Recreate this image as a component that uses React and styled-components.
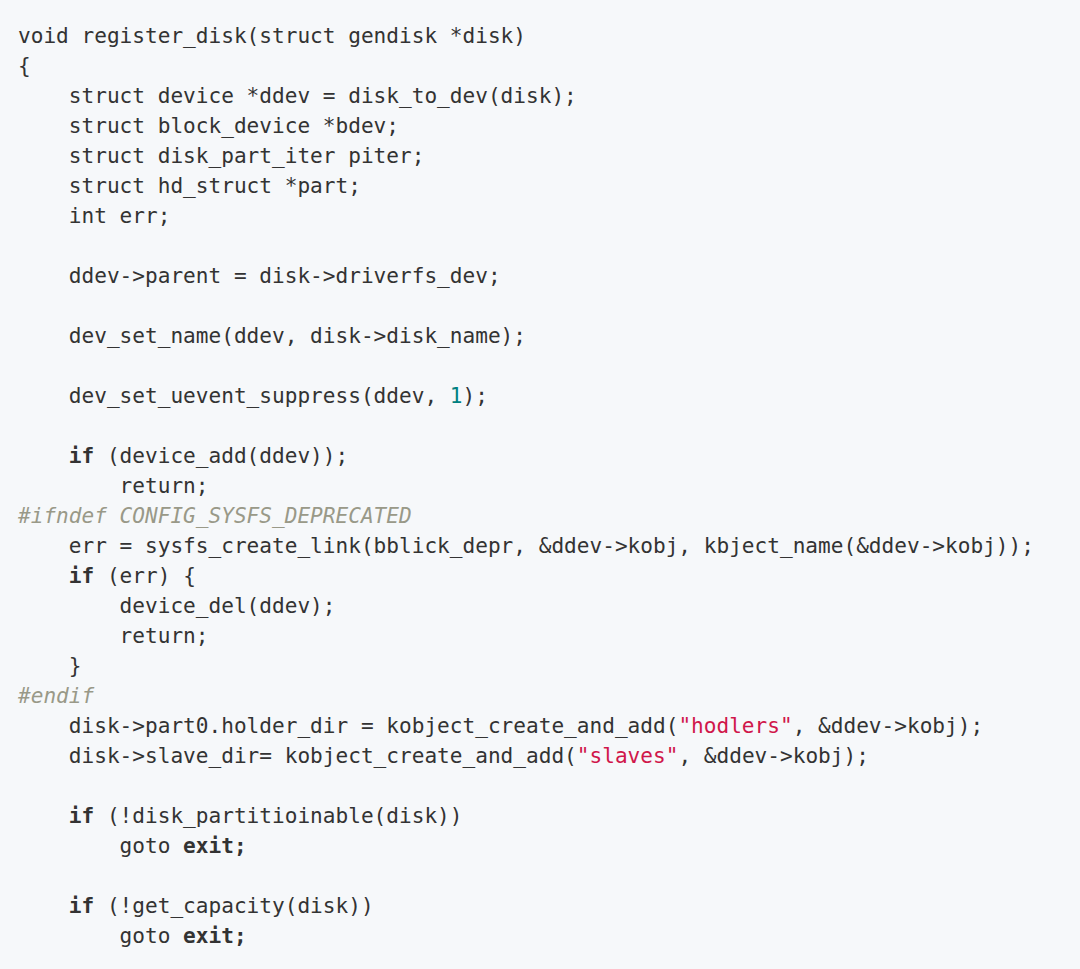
import React from 'react';
import styled, { createGlobalStyle } from 'styled-components';

const Global = createGlobalStyle`
  html, body {
    margin: 0;
    padding: 0;
    background: #f6f8fa;
  }
`;

const Block = styled.pre`
  margin: 0;
  padding: 21px 18px 20px;
  min-height: 969px;
  box-sizing: border-box;
  background: #f6f8fa;
  color: #333;
  font-family: 'DejaVu Sans Mono', 'Liberation Mono', monospace;
  font-size: 21.1px;
  line-height: 30px;
  white-space: pre;
`;

const Line = styled.div`
  height: 30px;
`;

const Kw = styled.span`
  font-weight: bold;
  color: #333;
`;

const Str = styled.span`
  color: #d0164a;
`;

const Num = styled.span`
  color: #008080;
`;

const Meta = styled.span`
  color: #999988;
  font-style: italic;
`;

const lines = [
  'void register_disk(struct gendisk *disk)',
  '{',
  '    struct device *ddev = disk_to_dev(disk);',
  '    struct block_device *bdev;',
  '    struct disk_part_iter piter;',
  '    struct hd_struct *part;',
  '    int err;',
  '',
  '    ddev->parent = disk->driverfs_dev;',
  '',
  '    dev_set_name(ddev, disk->disk_name);',
  '',
  <>    dev_set_uevent_suppress(ddev, <Num>1</Num>);</>,
  '',
  <>    <Kw>if</Kw> (device_add(ddev));</>,
  '        return;',
  <Meta>#ifndef CONFIG_SYSFS_DEPRECATED</Meta>,
  '    err = sysfs_create_link(bblick_depr, &ddev->kobj, kbject_name(&ddev->kobj));',
  <>    <Kw>if</Kw> (err) {'{'}</>,
  '        device_del(ddev);',
  '        return;',
  '    }',
  <Meta>#endif</Meta>,
  <>    disk->part0.holder_dir = kobject_create_and_add(<Str>"hodlers"</Str>, &ddev->kobj);</>,
  <>    disk->slave_dir= kobject_create_and_add(<Str>"slaves"</Str>, &ddev->kobj);</>,
  '',
  <>    <Kw>if</Kw> (!disk_partitioinable(disk))</>,
  <>        goto <Kw>exit;</Kw></>,
  '',
  <>    <Kw>if</Kw> (!get_capacity(disk))</>,
  <>        goto <Kw>exit;</Kw></>,
];

export default function App() {
  return (
    <>
      <Global />
      <Block>
        {lines.map((l, i) => (
          <Line key={i}>{l}</Line>
        ))}
      </Block>
    </>
  );
}
